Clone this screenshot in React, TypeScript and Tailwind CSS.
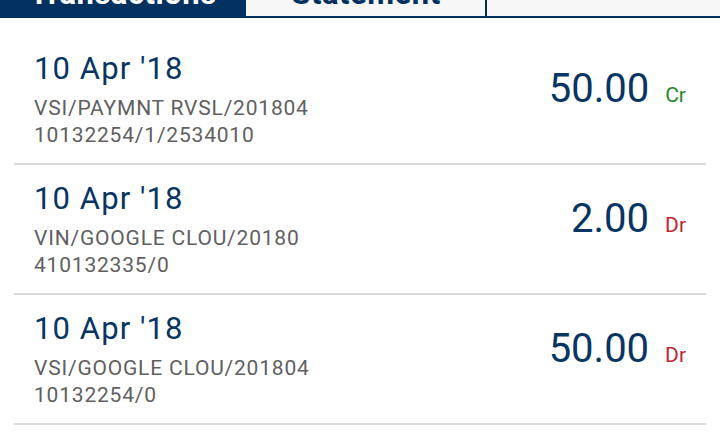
import React from "react";

type Txn = {
  date: string;
  lines: string[];
  amount: string;
  kind: "Cr" | "Dr";
};

const txns: Txn[] = [
  {
    date: "10 Apr '18",
    lines: ["VSI/PAYMNT RVSL/201804", "10132254/1/2534010"],
    amount: "50.00",
    kind: "Cr",
  },
  {
    date: "10 Apr '18",
    lines: ["VIN/GOOGLE CLOU/20180", "410132335/0"],
    amount: "2.00",
    kind: "Dr",
  },
  {
    date: "10 Apr '18",
    lines: ["VSI/GOOGLE CLOU/201804", "10132254/0"],
    amount: "50.00",
    kind: "Dr",
  },
];

const App = () => {
  return (
    <div className="w-[720px] h-[446px] overflow-hidden bg-white font-['Roboto',sans-serif]">
      <div className="-mt-[40px]">
        {/* tabs */}
        <div className="flex h-[58px] border-b-2 border-[#00305f] bg-[#f7f7f7]">
          <div className="w-[246px] flex items-end justify-center pb-[7px] bg-[#00315f] text-white text-[31px] font-bold leading-none tracking-[0.5px]">
            Transactions
          </div>
          <div className="w-[240px] ml-px flex items-end justify-center pb-[7px] border-r-2 border-[#00305f] text-[#00305f] text-[31px] font-bold leading-none tracking-[0.5px]">
            Statement
          </div>
          <div className="flex-1" />
        </div>

        {/* list */}
        <div className="pt-[17px]">
          {txns.map((t, i) => (
            <div
              key={i}
              className="mx-[14px] h-[130px] border-b-2 border-[#d9d9d9] flex justify-between pl-[20px] pr-[20px] pt-[15px]"
            >
              <div>
                <p className="text-[31px] leading-[37px] tracking-[1.1px] text-[#083563]">
                  {t.date}
                </p>
                <div className="mt-[8px] text-[21px] leading-[27px] tracking-[0.8px] text-[#606060]">
                  {t.lines.map((l) => (
                    <p key={l}>{l}</p>
                  ))}
                </div>
              </div>
              <div className="mt-[15px] flex items-baseline">
                <span className="text-[40px] leading-[48px] text-[#083563]">
                  {t.amount}
                </span>
                <span
                  className={
                    t.kind === "Cr"
                      ? "ml-[16px] text-[21px] text-[#22892a]"
                      : "ml-[16px] text-[21px] text-[#c0272d]"
                  }
                >
                  {t.kind}
                </span>
              </div>
            </div>
          ))}
        </div>
      </div>
    </div>
  );
};

export default App;
